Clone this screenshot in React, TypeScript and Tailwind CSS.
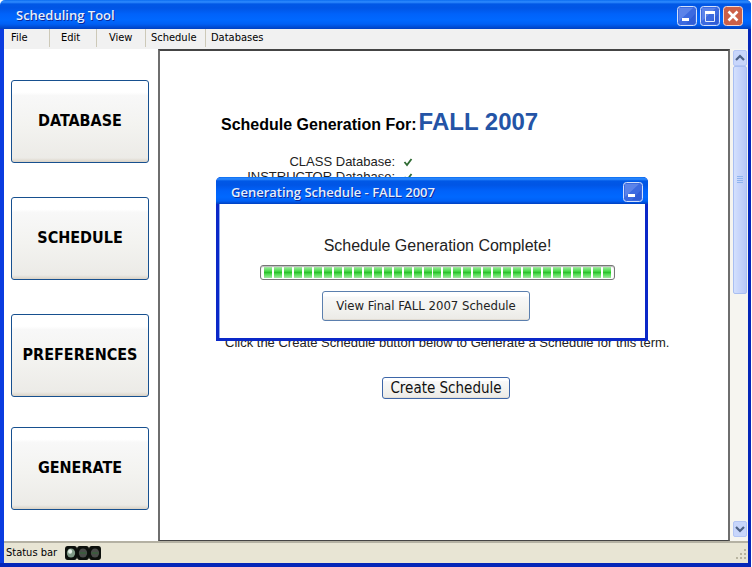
import React from "react";

const uiFont = "font-['DejaVu_Sans_Condensed','Open_Sans',sans-serif]";
const docFont = "font-['Liberation_Sans',Arial,sans-serif]";
const titleFont = "font-['Open_Sans','Noto_Sans',sans-serif]";

const barGradient =
  "bg-[linear-gradient(to_bottom,#0a6cf0_0px,#2f8cff_2px,#0058e6_4px,#0055e5_8px,#0062fa_14px,#0068ff_20px,#0060f5_24px,#0040c0_100%)]";
const buttonFace =
  "bg-[linear-gradient(to_bottom,#ffffff_0%,#ffffff_14%,#f8f8f8_18%,#f3f3f0_55%,#ecebe7_95%,#d9d2c6_100%)]";

function MinimizeButton() {
  return (
    <button type="button" aria-label="Minimize" className="block size-5">
      <svg viewBox="0 0 20 20" className="size-5">
        <rect x="0.5" y="0.5" width="19" height="19" rx="3" fill="#3c6ae0" stroke="#d3e0fb" />
        <path d="M2 2H16L2 15Z" fill="#6f94ee" opacity="0.6" />
        <path d="M18 8V18H9Z" fill="#2350cc" opacity="0.5" />
        <rect x="5" y="12" width="7" height="3" fill="#fff" />
      </svg>
    </button>
  );
}

function MaximizeButton() {
  return (
    <button type="button" aria-label="Maximize" className="block size-5">
      <svg viewBox="0 0 20 20" className="size-5">
        <rect x="0.5" y="0.5" width="19" height="19" rx="3" fill="#3c6ae0" stroke="#d3e0fb" />
        <path d="M2 2H16L2 15Z" fill="#6f94ee" opacity="0.6" />
        <path d="M18 8V18H9Z" fill="#2350cc" opacity="0.5" />
        <path d="M5.5 6V15.5H14.5V6" fill="none" stroke="#e3ebfd" />
        <rect x="5" y="5" width="10" height="3" fill="#fff" />
      </svg>
    </button>
  );
}

function CloseButton() {
  return (
    <button type="button" aria-label="Close" className="block size-5">
      <svg viewBox="0 0 20 20" className="size-5">
        <rect x="0.5" y="0.5" width="19" height="19" rx="3" fill="#cc6048" stroke="#f3d9d3" />
        <path d="M5.5 5.5L14.5 14.5M14.5 5.5L5.5 14.5" stroke="#fff" strokeWidth="2.6" />
      </svg>
    </button>
  );
}

function Check() {
  return (
    <svg viewBox="0 0 10 10" className="size-[10px]" role="img" aria-label="ready">
      <path d="M1.5 5L4 8L8.5 2" fill="none" stroke="#2f6b33" strokeWidth="1.8" />
    </svg>
  );
}

function ScrollArrow({ label, d }: { label: string; d: string }) {
  return (
    <button
      type="button"
      aria-label={label}
      className="grid h-4 w-[14px] shrink-0 place-items-center rounded-[2px] border border-[#b4c6f4] bg-[#c8d6fb]"
    >
      <svg viewBox="0 0 10 8" className="h-2 w-[10px]">
        <path d={d} fill="none" stroke="#4d6185" strokeWidth="2.2" />
      </svg>
    </button>
  );
}

function NavButton({ children }: { children: React.ReactNode }) {
  return (
    <button
      type="button"
      className={`h-[83px] w-full rounded-[3px] border border-[#17508f] pb-[2px] text-base font-bold text-black ${buttonFace}`}
    >
      {children}
    </button>
  );
}

function StatusLight({ on }: { on?: boolean }) {
  return (
    <svg viewBox="0 0 13 14" className="h-[14px] w-[12px]" preserveAspectRatio="none">
      <rect width="13" height="14" rx="3" fill="#0c100c" />
      <circle cx="6.5" cy="7" r="4.5" fill={on ? "#7f9a86" : "#4a4d4a"} />
      {on ? (
        <circle cx="5.5" cy="5.5" r="2.2" fill="#e4efe6" />
      ) : (
        <path d="M3 7H10" stroke="#2f6b33" />
      )}
    </svg>
  );
}

const menuItem = "h-[18px] border-r border-[#cdc9b8] text-left";

function MenuBar() {
  return (
    <nav className="flex h-[20px] shrink-0 items-start bg-[#f1f1f1] text-[11px] text-black">
      <button type="button" className={`w-[46px] pl-[7px] ${menuItem}`}>File</button>
      <button type="button" className={`w-[47px] pl-[11px] ${menuItem}`}>Edit</button>
      <button type="button" className={`w-[49px] pl-[12px] ${menuItem}`}>View</button>
      <button type="button" className={`w-[60px] pl-[5px] ${menuItem}`}>Schedule</button>
      <button type="button" className="h-[18px] pl-[5px] text-left">Databases</button>
    </nav>
  );
}

function Dialog() {
  return (
    <section
      role="dialog"
      aria-label="Generating Schedule - FALL 2007"
      className="absolute top-[126px] left-[56px] w-[432px] rounded-t-[5px] bg-[#0a28c8]"
    >
      <header className={`flex h-[27px] items-center justify-between rounded-t-[5px] pt-[2px] pr-[5px] pl-[15px] ${barGradient}`}>
        <h2 className={`text-[13px] leading-5 font-semibold text-[#e6eefc] [text-shadow:1px_1px_0_#0a2a9c] ${titleFont}`}>
          Generating Schedule - FALL 2007
        </h2>
        <MinimizeButton />
      </header>
      <div className="mx-[3px] border-l border-[#8fa8f0] bg-white pt-8 pb-[17px] pl-10">
        <p className={`w-[355px] text-center text-base leading-5 text-[#222] ${docFont}`}>
          Schedule Generation Complete!
        </p>
        <div
          role="progressbar"
          aria-label="Schedule generation"
          aria-valuenow={100}
          className="mt-[9px] flex h-[15px] w-[355px] justify-between rounded-[3px] border border-[#777] bg-white px-[3px] py-px shadow-[inset_0_1px_1px_#bbb]"
        >
          {Array.from({ length: 35 }, (_, i) => (
            <span
              key={i}
              className="h-[11px] w-[8px] bg-[linear-gradient(to_bottom,#a5eba5_0%,#4fdb4f_35%,#2cc12c_50%,#4fdb4f_65%,#a0e8a0_100%)]"
            />
          ))}
        </div>
        <button
          type="button"
          className={`mt-[11px] ml-[62px] block h-[30px] w-[208px] rounded-[3px] border border-[#5b7fae] text-[13px] text-[#222] ${buttonFace} ${uiFont}`}
        >
          View Final FALL 2007 Schedule
        </button>
      </div>
      <div className="h-[3px] bg-[#0a28c8]" />
    </section>
  );
}

function DatabaseRow({ name }: { name: string }) {
  return (
    <li className="flex h-[15px] items-center justify-end gap-2">
      {name} Database:
      <Check />
    </li>
  );
}

function Workspace() {
  return (
    <main className={`relative min-w-0 flex-1 border-2 border-b border-x-[#6e6e6e] border-y-[#444] bg-white text-[#222] ${docFont}`}>
      <h1 className="mt-[55px] ml-[61px] flex items-baseline gap-[2px] text-base leading-8 font-bold text-black">
        Schedule Generation For:
        <strong className="text-2xl leading-8 text-[#2454a6]">FALL 2007</strong>
      </h1>
      <ul className="mt-[13px] ml-[61px] w-[192px] text-[13px]">
        <DatabaseRow name="CLASS" />
        <DatabaseRow name="INSTRUCTOR" />
      </ul>
      <p className="mt-[149px] ml-[65px] text-[13px] leading-5 whitespace-nowrap">
        Click the Create Schedule button below to Generate a Schedule for this term.
      </p>
      <button
        type="button"
        className={`mt-6 mb-10 ml-[222px] block h-[22px] w-[128px] rounded-[3px] border border-[#3d66a8] pb-[2px] text-[15px] leading-5 text-[#111] ${buttonFace} ${uiFont}`}
      >
        Create Schedule
      </button>
      <Dialog />
    </main>
  );
}

function ScrollBar() {
  return (
    <div className="flex w-[18px] shrink-0 flex-col items-end bg-[#f6f5f0] pt-px pr-px pb-1">
      <ScrollArrow label="Scroll up" d="M1 6L5 2L9 6" />
      <div className="flex min-h-0 w-[14px] flex-1 flex-col">
        <div className="grid h-1/2 place-items-center rounded-[2px] border border-[#a9bff2] bg-[linear-gradient(to_right,#d3e0fd,#b9c8f8)]">
          <svg viewBox="0 0 6 8" className="h-2 w-[6px]">
            <path d="M0 .5H6M0 2.5H6M0 4.5H6M0 6.5H6" stroke="#8fb4ee" />
          </svg>
        </div>
      </div>
      <ScrollArrow label="Scroll down" d="M1 2L5 6L9 2" />
    </div>
  );
}

export default function App() {
  return (
    <div className={`flex min-h-screen flex-col bg-white pr-px ${uiFont}`}>
      <div className="flex flex-1 flex-col rounded-t-[5px] border-r-[3px] border-b-4 border-[#0426b8] bg-white">
        <header className={`-mr-[3px] flex h-[29px] shrink-0 items-center justify-between rounded-t-[5px] pt-[3px] pr-2 pl-4 ${barGradient}`}>
          <div className={`text-[13px] font-semibold text-[#e6eefc] [text-shadow:1px_1px_0_#0a2a9c] ${titleFont}`}>
            Scheduling Tool
          </div>
          <div className="flex gap-[3px]">
            <MinimizeButton />
            <MaximizeButton />
            <CloseButton />
          </div>
        </header>
        <div className="flex flex-1 flex-col border-l-4 border-[#0a3ce0]">
          <MenuBar />
          <div className="flex flex-1 bg-white">
            <aside className="w-[154px] shrink-0 pt-[31px] pr-[9px] pl-[7px]">
              <nav className="flex flex-col gap-[34px]">
                <NavButton>DATABASE</NavButton>
                <NavButton>SCHEDULE</NavButton>
                <NavButton>PREFERENCES</NavButton>
              </nav>
              <div className="pt-[30px]">
                <NavButton>GENERATE</NavButton>
              </div>
            </aside>
            <Workspace />
            <ScrollBar />
          </div>
          <footer className="flex h-[22px] shrink-0 items-center justify-between border-t-2 border-[#b4b1a3] bg-[#e8e5d4] pl-[2px] text-[11px] text-black">
            <div className="flex items-center gap-2">
              Status bar
              <div className="flex" role="img" aria-label="Ready">
                <StatusLight on />
                <StatusLight />
                <StatusLight />
              </div>
            </div>
            <svg viewBox="0 0 12 12" className="mt-1 size-3">
              <path
                d="M8 0h2v2h-2zM4 4h2v2h-2zM8 4h2v2h-2zM0 8h2v2h-2zM4 8h2v2h-2zM8 8h2v2h-2z"
                fill="#b8b4a0"
              />
            </svg>
          </footer>
        </div>
      </div>
    </div>
  );
}
